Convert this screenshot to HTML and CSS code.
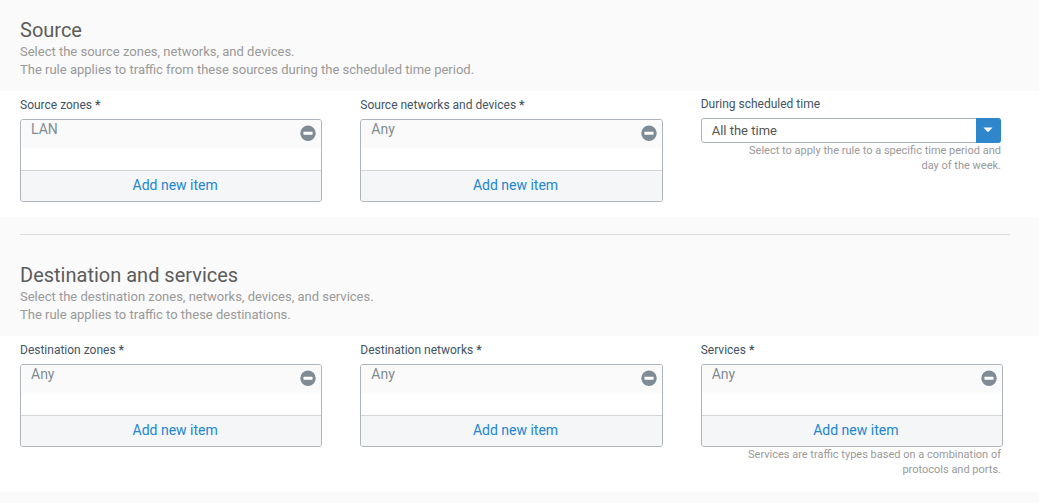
FILE: index.html
```html
<!DOCTYPE html>
<html lang="en">
<head>
    <meta charset="UTF-8">
    <meta name="viewport" content="width=device-width, initial-scale=1.0">
    <title>Firewall rule</title>
    <link rel="stylesheet" href="styles.css">
</head>
<body>

    <form>
        <section>
            <div class="section-head">
                <h2>Source</h2>
                <p>Select the source zones, networks, and devices.<br>The rule applies to traffic from these sources during the scheduled time period.</p>
            </div>
            <div class="panel">
                <div class="field" role="group" aria-labelledby="srcZones">
                    <div class="label" id="srcZones">Source zones <b>*</b></div>
                    <div class="picker">
                        <div class="item">
                            <span>LAN</span>
                            <button type="button" class="remove" aria-label="Remove LAN">
                                <svg width="16" height="16" viewBox="0 0 16 16"><circle cx="8" cy="8.3" r="7.7" fill="#7f8c95"/><rect x="3.5" y="6.8" width="9" height="3" rx=".5" fill="#fff"/></svg>
                            </button>
                        </div>
                        <button type="button" class="add">Add new item</button>
                    </div>
                </div>
                <div class="field" role="group" aria-labelledby="srcNetworks">
                    <div class="label" id="srcNetworks">Source networks and devices <b>*</b></div>
                    <div class="picker">
                        <div class="item">
                            <span>Any</span>
                            <button type="button" class="remove" aria-label="Remove Any">
                                <svg width="16" height="16" viewBox="0 0 16 16"><circle cx="8" cy="8.3" r="7.7" fill="#7f8c95"/><rect x="3.5" y="6.8" width="9" height="3" rx=".5" fill="#fff"/></svg>
                            </button>
                        </div>
                        <button type="button" class="add">Add new item</button>
                    </div>
                </div>
                <div class="field">
                    <label class="label schedule-label" for="schedule">During scheduled time</label>
                    <div class="select">
                        <select id="schedule">
                            <option>All the time</option>
                        </select>
                        <span class="arrow">
                            <svg width="10" height="6" viewBox="0 0 10 6"><path d="M.5.5h9L5.8 4.6q-.8.8-1.6 0z" fill="#fff"/></svg>
                        </span>
                    </div>
                    <p class="hint">Select to apply the rule to a specific time period and day of the week.</p>
                </div>
            </div>
        </section>

        <hr>

        <section>
            <div class="section-head">
                <h2>Destination and services</h2>
                <p>Select the destination zones, networks, devices, and services.<br>The rule applies to traffic to these destinations.</p>
            </div>
            <div class="panel">
                <div class="field" role="group" aria-labelledby="dstZones">
                    <div class="label" id="dstZones">Destination zones <b>*</b></div>
                    <div class="picker">
                        <div class="item">
                            <span>Any</span>
                            <button type="button" class="remove" aria-label="Remove Any">
                                <svg width="16" height="16" viewBox="0 0 16 16"><circle cx="8" cy="8.3" r="7.7" fill="#7f8c95"/><rect x="3.5" y="6.8" width="9" height="3" rx=".5" fill="#fff"/></svg>
                            </button>
                        </div>
                        <button type="button" class="add">Add new item</button>
                    </div>
                </div>
                <div class="field" role="group" aria-labelledby="dstNetworks">
                    <div class="label" id="dstNetworks">Destination networks <b>*</b></div>
                    <div class="picker">
                        <div class="item">
                            <span>Any</span>
                            <button type="button" class="remove" aria-label="Remove Any">
                                <svg width="16" height="16" viewBox="0 0 16 16"><circle cx="8" cy="8.3" r="7.7" fill="#7f8c95"/><rect x="3.5" y="6.8" width="9" height="3" rx=".5" fill="#fff"/></svg>
                            </button>
                        </div>
                        <button type="button" class="add">Add new item</button>
                    </div>
                </div>
                <div class="field" role="group" aria-labelledby="services">
                    <div class="label" id="services">Services <b>*</b></div>
                    <div class="picker">
                        <div class="item">
                            <span>Any</span>
                            <button type="button" class="remove" aria-label="Remove Any">
                                <svg width="16" height="16" viewBox="0 0 16 16"><circle cx="8" cy="8.3" r="7.7" fill="#7f8c95"/><rect x="3.5" y="6.8" width="9" height="3" rx=".5" fill="#fff"/></svg>
                            </button>
                        </div>
                        <button type="button" class="add">Add new item</button>
                    </div>
                    <p class="hint">Services are traffic types based on a combination of protocols and ports.</p>
                </div>
            </div>
        </section>
    </form>

</body>
</html>
```
FILE: styles.css
```css
* {
    box-sizing: border-box;
}

body {
    margin: 0;
    background: #fafafa;
    color: #555;
    font-family: Roboto, Arial, sans-serif;
    font-size: 13px;
}

button, select {
    font-family: inherit;
}

.section-head {
    padding: 18px 20px 12px;
}

.section-head h2 {
    margin: 0;
    font-size: 20px;
    font-weight: 400;
    line-height: 25px;
    color: #5c5c5c;
}

.section-head p {
    margin: 0;
    line-height: 18px;
    color: #999;
}

hr {
    margin: 17px 29px 10px 20px;
    border: 0;
    border-top: 1px solid #ddd;
}

.panel {
    display: grid;
    grid-template-columns: repeat(3, 1fr);
    gap: 38px;
    padding: 5px 36px 15px 20px;
    background: #fff;
}

.label {
    display: block;
    height: 23px;
    font-size: 12px;
    line-height: 18px;
    color: #415463;
}

.schedule-label {
    height: 22px;
    line-height: 16px;
}

.picker {
    border: 1px solid #adb5bb;
    border-radius: 3px;
    overflow: hidden;
}

.item {
    display: flex;
    justify-content: space-between;
    height: 28px;
    margin-bottom: 22px;
    padding: 0 5px 0 10px;
    background: #fafafa;
    font-size: 14px;
    line-height: 18px;
    color: #7f8c95;
}

.remove {
    display: flex;
    padding: 5px 0 0;
    border: 0;
    background: none;
    cursor: pointer;
}

.add {
    display: block;
    width: 100%;
    height: 31px;
    padding: 0 0 2px 8px;
    border: 0;
    border-top: 1px solid #d3d3d8;
    background: #f4f6f8;
    color: #2286d0;
    font-size: 14px;
    cursor: pointer;
}

.select {
    position: relative;
    margin-right: 2px;
}

.select select {
    display: block;
    width: 100%;
    height: 25px;
    padding: 0 30px 0 10px;
    border: 1px solid #adb5bb;
    border-radius: 3px;
    background: #fff;
    color: #555;
    font-size: 13px;
    appearance: none;
}

/* blue drop-down cap over the right end of the select */
.arrow {
    position: absolute;
    top: 0;
    right: 0;
    display: flex;
    align-items: center;
    justify-content: center;
    width: 25px;
    height: 25px;
    padding: 0 1px 1px 0;
    border-radius: 0 3px 3px 0;
    background: #2e86cc;
    pointer-events: none;
}

.hint {
    margin: 0 2px 0 32px;
    font-size: 11px;
    line-height: 15px;
    text-align: right;
    color: #999;
}
```
